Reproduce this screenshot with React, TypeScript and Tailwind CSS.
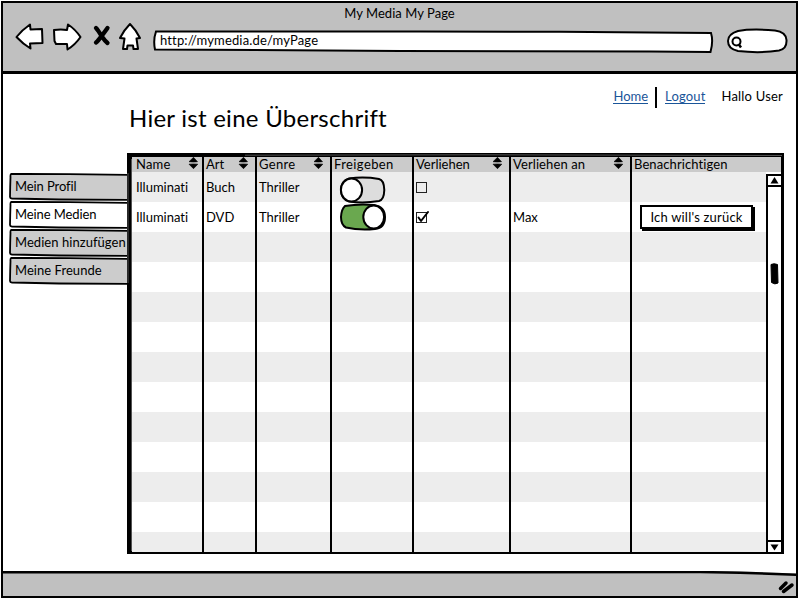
import React from "react";

const columns = [
  { label: "Name", w: "w-[72px]", sort: "mr-[3px]", pad: "pl-[4px]", track: "tracking-[.2px]" },
  { label: "Art", w: "w-[53px]", sort: "mr-[6px]", pad: "pl-[2px]", track: "" },
  { label: "Genre", w: "w-[75px]", sort: "mr-[6px]", pad: "pl-[2px]", track: "tracking-[.3px]" },
  { label: "Freigeben", w: "w-[82px]", sort: "", pad: "pl-[2px]", track: "tracking-[.4px]" },
  { label: "Verliehen", w: "w-[97px]", sort: "mr-[6px]", pad: "pl-[2px]", track: "" },
  { label: "Verliehen an", w: "w-[121px]", sort: "mr-[6px]", pad: "pl-[2px]", track: "tracking-[.1px]" },
];

const tabs = [
  { label: "Mein Profil", track: "tracking-[-.1px]" },
  { label: "Meine Medien", track: "tracking-[-.1px]" },
  { label: "Medien hinzufügen", track: "tracking-[.05px]" },
  { label: "Meine Freunde", track: "tracking-[.05px]" },
];

function SortIcon({ margin }: { margin: string }) {
  return (
    <svg className={`${margin} h-3 w-[11px] shrink-0`} viewBox="0 0 11 12">
      <path d="M5.5 .3 L9.5 4.7 Q5.5 5.4 1 4.7Z M1 7.2 Q5.5 6.6 9.8 7.2 L5.5 11.7Z" stroke="black" strokeWidth=".6" strokeLinejoin="round" />
    </svg>
  );
}

function Toggle({ on }: { on: boolean }) {
  return (
    <svg className="relative z-10 h-[28px] w-[48px] shrink-0" viewBox="0 0 48 28" stroke="black" strokeWidth="2" fill="none">
      {on ? (
        <>
          <path d="M6 3 Q20 .6 35 2 Q46 4 46 14 Q46 25 36 26 Q20 27.5 7 24.5 Q2 22 2 14 Q2.500 6 6 3Z" fill="#6aa84f" />
          <ellipse cx="34.700" cy="14" rx="10.400" ry="11.500" fill="white" />
        </>
      ) : (
        <>
          <path d="M10 2.500 Q25 .5 40 3 Q45 4 45.300 14 Q45 24 40 25 Q25 27.500 10 25.500 Q2 23 2 14 Q2 5 10 2.500Z" fill="#dddddd" />
          <ellipse cx="12.500" cy="14" rx="10.600" ry="11.500" fill="white" />
        </>
      )}
    </svg>
  );
}

function Check({ on }: { on: boolean }) {
  return (
    <svg className="-ml-px mt-[8px] h-[16px] w-[16px]" viewBox="0 0 16 16" fill="none" stroke="black">
      <rect x="1.500" y="2.500" width="10" height="10" fill={on ? "white" : "#ededed"} strokeWidth="1" stroke="#222" />
      {on && <path d="M3.500 7.500 L6 11 L13 2" strokeWidth="2" strokeLinecap="round" strokeLinejoin="round" />}
    </svg>
  );
}

function Row({ index, cells, action }: { index: number; cells: React.ReactNode[]; action?: React.ReactNode }) {
  return (
    <div className={`flex h-[30px] shrink-0 ${index % 2 ? "bg-white" : "bg-[#ededed]"}`}>
      {columns.map((c, i) => (
        <div key={c.label} className={`${c.w} ${c.pad} shrink-0 border-r-2 border-black leading-[30px]`}>
          {cells[i]}
        </div>
      ))}
      <div className="flex-1">{action}</div>
    </div>
  );
}

function Tab({ label, track, active }: { label: string; track: string; active: boolean }) {
  return (
    <div className="relative h-[28px] w-[119px]">
      <svg className="absolute inset-0 h-[28px] w-[119px]" viewBox="0 0 119 28">
        <path
          d="M119 1.800 L60 1.200 L2.500 .8 Q1.200 1 1.500 4 L1.200 14 L1 24 Q1 25.300 3 25.500 L50 26.500 L119 26.800"
          fill={active ? "white" : "#cccccc"}
          stroke="black"
          strokeWidth="1.800"
        />
      </svg>
      <span className={`${track} relative block whitespace-nowrap pl-[6px] leading-[26px]`}>{label}</span>
    </div>
  );
}

function Toolbar() {
  return (
    <div className="flex h-[47px] items-start pl-[12px]">
      <svg className="h-[32px] w-[130px] shrink-0" viewBox="15 22 130 32" fill="white" stroke="black" strokeWidth="2" strokeLinejoin="round">
        <path d="M16.500 37 Q22 30 30 24.500 L30.500 29.500 L42 29 L42.500 43 L30 43.500 L30.500 48.500 Q23 44 16.500 37Z" />
        <path d="M54 30 Q61 29 67 30 L68 24.500 Q75 29 80.500 37 Q75 45 67.500 49.500 L67 44 L56 44 L54.500 41Z" />
        <path d="M96 28 Q98 30 101.500 36 Q105 41 107.500 43 M107.500 28 Q104 33 101.500 36 Q98 41 96 42.500" fill="none" strokeWidth="4.300" strokeLinecap="round" />
        <path d="M130 24 Q136 30 140 38 L136.500 38.500 L138 49 L133.500 49 L133 45.500 L127.500 45.500 L127 49 L123 49 L124.500 38.500 L120 38 Q124 30 130 24Z" />
      </svg>
      <div className="relative ml-[7px] mt-[7px] h-[24px] w-[562px]">
        <svg className="absolute inset-0 h-[24px] w-[562px]" viewBox="152 29 562 24">
          <path d="M156 31.500 L420 31.500 L560 31.800 L650 32.500 L711 33 Q713.500 41 710.500 52 L650 51.500 L400 51 L155 49.500 Q153 40 156 31.500Z" fill="white" stroke="black" strokeWidth="2" />
        </svg>
        <span className="relative block pl-[8px] leading-[23px] tracking-[.15px]">http://mymedia.de/myPage</span>
      </div>
      <svg className="ml-[11px] mt-[5px] h-[28px] w-[64px] shrink-0" viewBox="725 27 64 28" fill="white" stroke="black" strokeWidth="2">
        <path d="M738 31 Q752 28.500 775 30.500 Q786 32 786.500 40 Q787 49 779 50.500 Q760 53.500 738 51 Q728 49 728 41 Q728 34 738 31Z" />
        <circle cx="736.500" cy="41.500" r="4" fill="none" />
        <path d="M738.500 44 L741 47.500" strokeWidth="2.500" />
      </svg>
    </div>
  );
}

export default function App() {
  return (
    <div className="relative h-[600px] w-[800px] overflow-hidden bg-white p-px pr-[2px] pb-[2px] font-['Lato',sans-serif] text-[13px] text-black [font-variant-ligatures:none]">
      <div className="flex h-full flex-col border-2 border-black">
        <header className="h-[71px] shrink-0 border-b-[3px] border-black bg-[#c0c0c0]">
          <h1 className="h-[19px] text-center leading-[21px] tracking-[.05px]">My Media My Page</h1>
          <Toolbar />
        </header>

        <main className="h-[497px] shrink-0 pl-[6px]">
          <nav className="flex h-[31px] items-start justify-end pr-[13px] pt-[13px] leading-[18px]">
            <a className="text-[#1a5599]"><span className="block h-[17px] border-b border-[#1a5599]">Home</span></a>
            <span className="ml-[7px] h-[21px] w-[2px] bg-black" />
            <a className="ml-[8px] text-[#1a5599]"><span className="block h-[17px] border-b border-[#1a5599] tracking-[.15px]">Logout</span></a>
            <span className="ml-[16px] tracking-[.2px]">Hallo User</span>
          </nav>
          <h2 className="h-[48px] pl-[120px] text-[24px] leading-[25px] tracking-[.26px]">Hier ist eine Überschrift</h2>

          <div className="flex">
            <aside className="w-[118px] pt-[20px]">
              {tabs.map((t) => (
                <Tab key={t.label} label={t.label} track={t.track} active={t.label === "Meine Medien"} />
              ))}
            </aside>
            <section className="relative h-[401px] w-[657px] shrink-0 border-b-2 border-l-[5px] border-r-[3px] border-t-4 border-black bg-white">
              <svg className="absolute -left-[5px] -top-[4px] h-[401px] w-[657px]" viewBox="0 0 657 401" fill="none" stroke="#777777" strokeWidth=".7">
                <path d="M118 2.200 L350 1.800 L655 2.500 M4.500 6 V398 M1 20 V130" />
              </svg>
              <div className="flex h-[15px] bg-[#cbcbcb]">
                {columns.map((c) => (
                  <div key={c.label} className={`${c.w} ${c.pad} flex shrink-0 justify-between border-r-2 border-black leading-[15px]`}>
                    <span className={c.track}>{c.label}</span>
                    {c.sort && <SortIcon margin={c.sort} />}
                  </div>
                ))}
                <div className="pl-[2px] leading-[15px] tracking-[.1px]">Benachrichtigen</div>
              </div>
              <div className="flex h-[380px]">
                <div className="flex w-[634px] flex-col overflow-hidden">
                  <Row
                    index={0}
                    cells={[
                      "Illuminati",
                      "Buch",
                      "Thriller",
                      <div className="ml-[5px] mt-[4px] flex h-[26px]"><Toggle on={false} /></div>,
                      <Check on={false} />,
                    ]}
                  />
                  <Row
                    index={1}
                    cells={[
                      "Illuminati",
                      "DVD",
                      "Thriller",
                      <div className="ml-[5px] flex h-[28px] pt-px"><Toggle on /></div>,
                      <Check on />,
                      "Max",
                    ]}
                    action={
                      <button className="ml-[8px] mt-[3px] flex h-[24px] w-[113px] items-center justify-center whitespace-nowrap border-2 border-black bg-white leading-none tracking-[.2px] shadow-[2px_2px_0_0_black]">
                        Ich will's zurück
                      </button>
                    }
                  />
                  {Array.from({ length: 11 }, (_, i) => (
                    <Row key={i} index={i + 2} cells={[]} />
                  ))}
                </div>
                <div className="mt-[2px] flex w-[15px] flex-col border-l-2 border-t-2 border-black bg-white">
                  <svg className="h-[11px] w-[13px] border-b-2 border-black" viewBox="0 0 13 9">
                    <path d="M6.500 1 L10.500 7.500 H2.500Z" />
                  </svg>
                  <svg className="ml-[2px] mt-[76px] h-[22px] w-[9px]" viewBox="0 0 9 22">
                    <path d="M1 1.500 Q4 0 7.500 1.500 L8 20 Q5 22 1.500 19.500Z" stroke="black" />
                  </svg>
                  <svg className="mt-auto h-[12px] w-[13px] border-t-2 border-black" viewBox="0 0 13 10">
                    <path d="M2.500 2.500 H10.500 L6.500 8.500Z" />
                  </svg>
                </div>
              </div>
            </section>
          </div>
        </main>

        <footer className="relative flex-1 bg-[#c0c0c0]">
          <svg className="absolute left-0 top-0 h-full w-full" viewBox="3 571 793 25" preserveAspectRatio="none">
            <path d="M3 570 H700 L796 573.500 V570Z" fill="white" />
            <path d="M3 572.300 L500 572.300 L700 572 L740 572.800 L797 574.700" fill="none" stroke="black" strokeWidth="2.500" />
            <path d="M780.500 588.500 L786 583 M783.500 591.500 L792 585" stroke="black" strokeWidth="3.500" strokeLinecap="round" />
          </svg>
        </footer>
      </div>
    </div>
  );
}
